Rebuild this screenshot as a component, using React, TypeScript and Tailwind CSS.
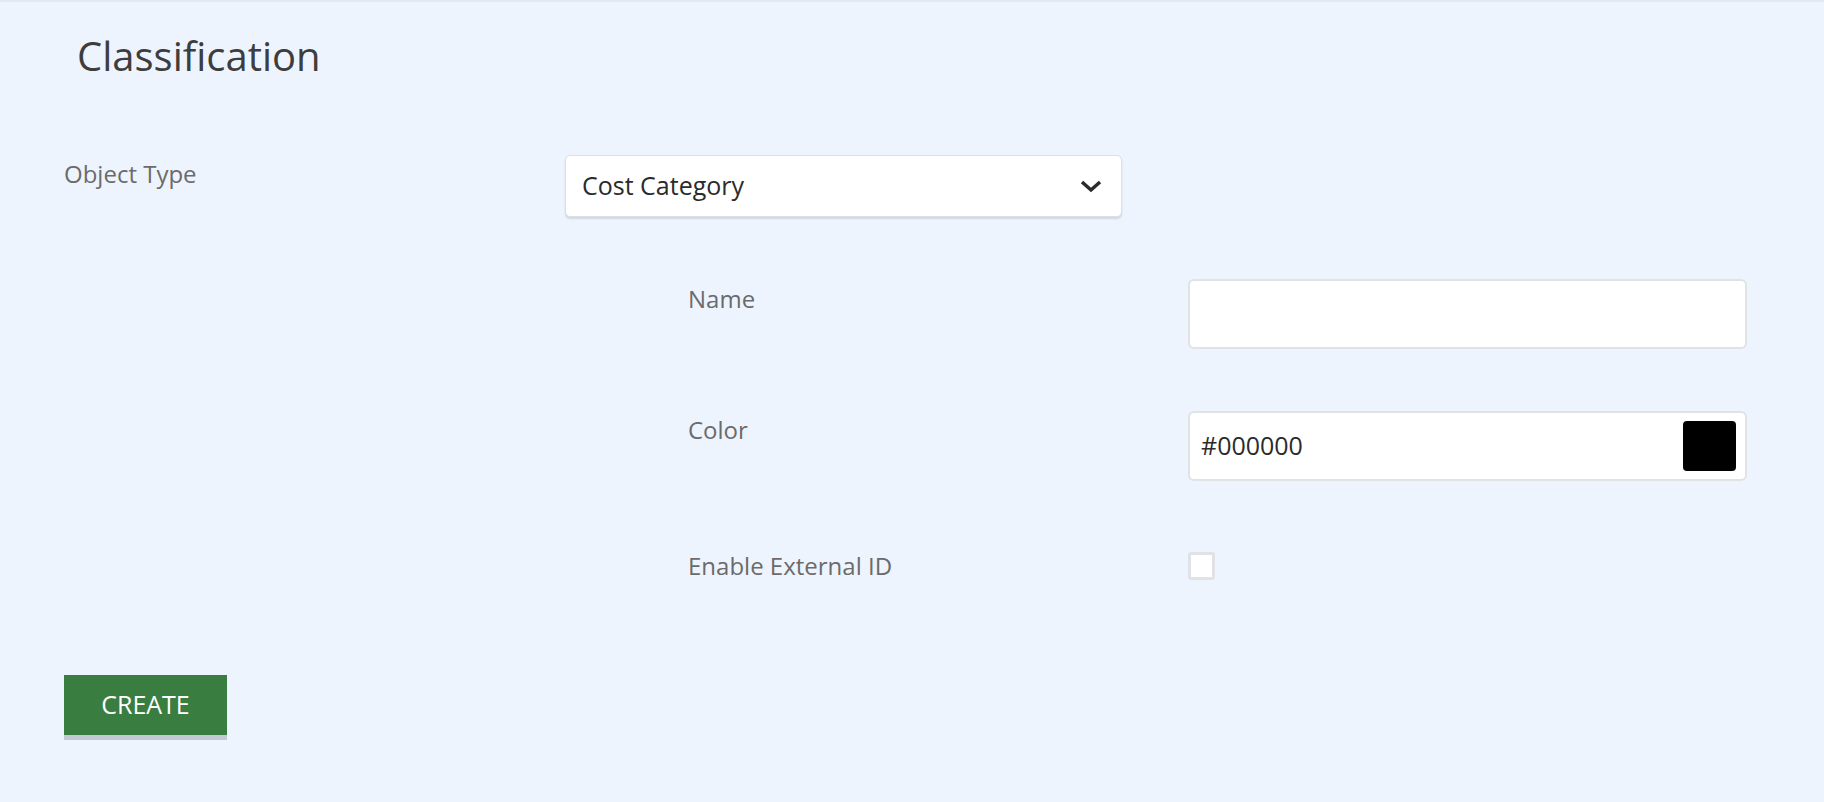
export default function App() {
  const font = { fontFamily: '"Open Sans", "Noto Sans", sans-serif' };
  return (
    <div style={font} className="w-[1824px] h-[802px] bg-[#eef4fe] border-t-2 border-[#e4e9f0] overflow-hidden">
      <h1 className="ml-[77px] mt-[28px] text-[40px] leading-[52px] text-[#3d3d3d]">Classification</h1>
      <div className="flex ml-[64px] mt-[73px]">
        <div className="w-[501px] text-[24px] text-[#6b6b6b] leading-[32px] pt-[3px]">Object Type</div>
        <div className="w-[557px] h-[62px] bg-white rounded-[5px] border border-[#dcdfe3] shadow-[0_2px_2px_rgba(0,0,0,0.12)] flex items-center justify-between pl-[16px] pr-[18px]">
          <span className="text-[25px] text-[#2b2b2b]">Cost Category</span>
          <svg width="24" height="16" viewBox="0 0 24 16"><path d="M3 4l9 8 9-8" fill="none" stroke="#2b2b2b" strokeWidth="3.5" /></svg>
        </div>
      </div>
      <div className="ml-[688px] mt-[62px] flex flex-col">
        <div className="flex h-[70px]">
          <div className="w-[500px] text-[24px] text-[#6b6b6b] leading-[32px] pt-[4px]">Name</div>
          <div className="w-[559px] h-[70px] bg-white rounded-[6px] border-2 border-[#e0e2e5]" />
        </div>
        <div className="flex h-[70px] mt-[62px]">
          <div className="w-[500px] text-[24px] text-[#6b6b6b] leading-[32px] pt-[3px]">Color</div>
          <div className="w-[559px] h-[70px] bg-white rounded-[6px] border-2 border-[#e0e2e5] flex items-center justify-between pl-[11px] pr-[9px]">
            <span className="text-[25px] text-[#2b2b2b]">#000000</span>
            <div className="w-[53px] h-[50px] bg-black rounded-[4px]" />
          </div>
        </div>
        <div className="flex mt-[69px] items-center">
          <div className="w-[500px] text-[24px] text-[#6b6b6b] leading-[32px]">Enable External ID</div>
          <div className="w-[27px] h-[28px] bg-white rounded-[3px] border-[3px] border-[#e0e2e5]" />
        </div>
      </div>
      <button className="ml-[64px] mt-[93px] w-[163px] h-[60px] bg-[#3a7d40] text-white text-[25px] shadow-[0_5px_0_#c4c9d1]">CREATE</button>
    </div>
  );
}
